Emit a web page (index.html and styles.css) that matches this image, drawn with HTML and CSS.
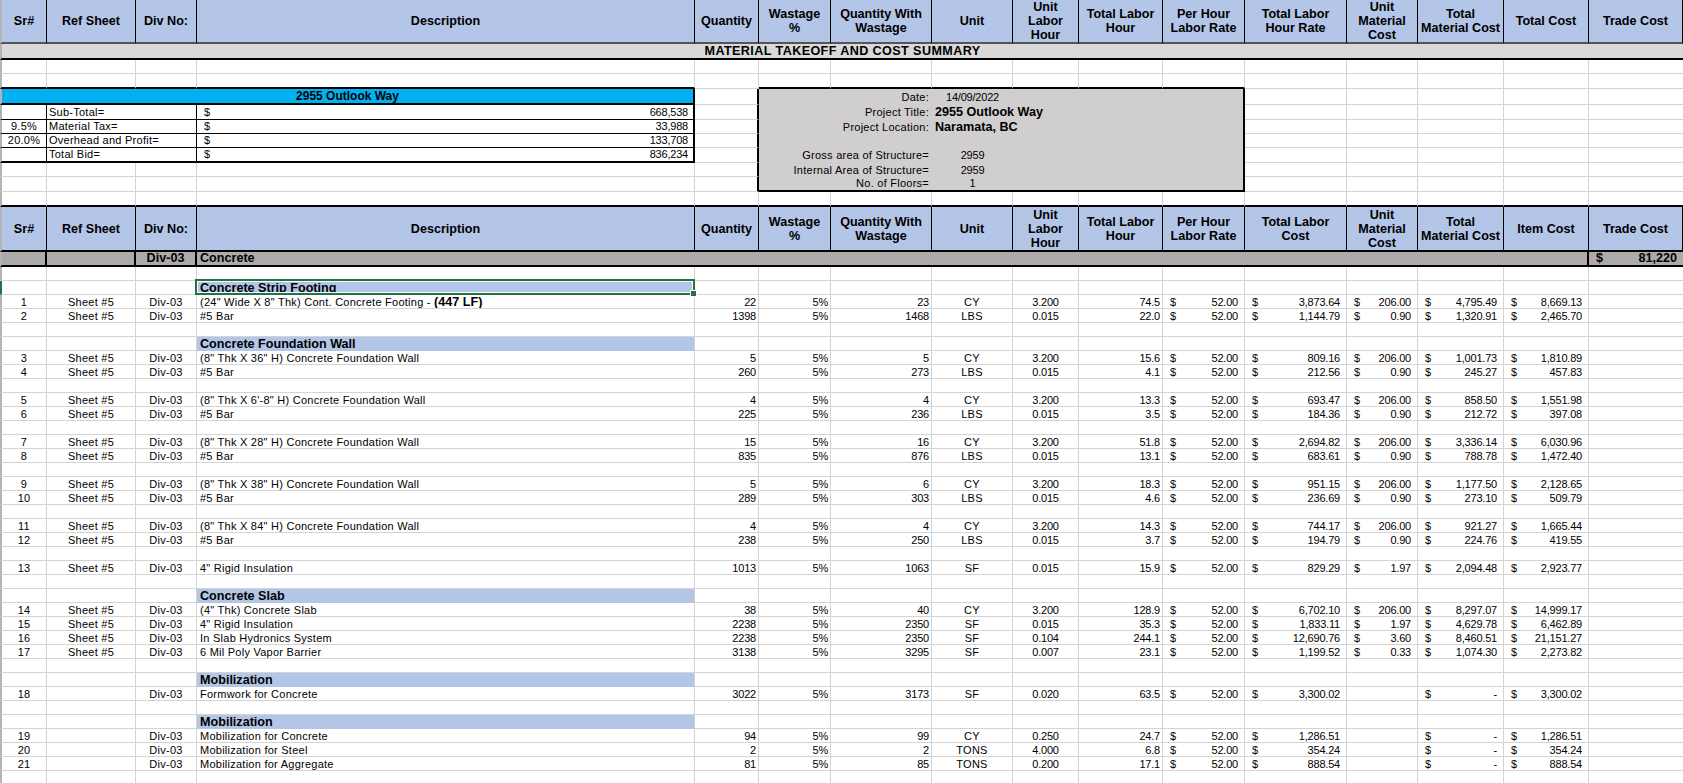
FILE: index.html
```html
<!DOCTYPE html>
<html lang="en">
<head>
    <meta charset="UTF-8">
    <title>Material Takeoff and Cost Summary</title>
    <link rel="stylesheet" href="styles.css">
</head>
<body>
    <table class="sheet">
        <colgroup>
            <col class="c-sr"><col class="c-ref"><col class="c-div"><col class="c-desc">
            <col class="c-qty"><col class="c-wast"><col class="c-qtyw"><col class="c-unit">
            <col class="c-ulh"><col class="c-tlh"><col class="c-rate"><col class="c-tlc">
            <col class="c-umc"><col class="c-tmc"><col class="c-item"><col class="c-trade">
        </colgroup>
        <tbody>
            <tr class="head head-top">
                <th>Sr#</th><th>Ref Sheet</th><th>Div No:</th><th>Description</th><th>Quantity</th><th>Wastage<br>%</th><th>Quantity With<br>Wastage</th><th>Unit</th><th>Unit<br>Labor<br>Hour</th><th>Total Labor<br>Hour</th><th>Per Hour<br>Labor Rate</th><th>Total Labor<br>Hour Rate</th><th>Unit<br>Material<br>Cost</th><th>Total<br>Material Cost</th><th>Total Cost</th><th>Trade Cost</th>
            </tr>
            <tr class="h16"><td class="title" colspan="16">MATERIAL TAKEOFF AND COST SUMMARY</td></tr>
            <tr><td></td><td></td><td></td><td></td><td></td><td></td><td></td><td></td><td></td><td></td><td></td><td></td><td></td><td></td><td></td><td></td></tr>
            <tr class="h15"><td class="over"></td><td class="over"></td><td class="over"></td><td class="over"></td><td></td><td class="over"></td><td class="over"></td><td class="over"></td><td class="over"></td><td class="over"></td><td class="over"></td><td></td><td></td><td></td><td></td><td></td></tr>

            <tr class="h16">
                <td class="bar" colspan="4">2955 Outlook Way</td><td class="edge"></td>
                <td class="info label" colspan="2">Date:</td><td class="info val">14/09/2022</td><td class="info end" colspan="3"></td>
                <td></td><td></td><td></td><td></td><td></td>
            </tr>
            <tr class="h15">
                <td class="sum"></td><td class="sum" colspan="2">Sub-Total=</td><td class="sum amt" colspan="1"><span>$</span>668,538</td><td class="edge"></td>
                <td class="info label" colspan="2">Project Title:</td><td class="info strong end" colspan="4">2955 Outlook Way</td>
                <td></td><td></td><td></td><td></td><td></td>
            </tr>
            <tr>
                <td class="sum pct">9.5%</td><td class="sum" colspan="2">Material Tax=</td><td class="sum amt"><span>$</span>33,988</td><td class="edge"></td>
                <td class="info label" colspan="2">Project Location:</td><td class="info strong end" colspan="4">Naramata, BC</td>
                <td></td><td></td><td></td><td></td><td></td>
            </tr>
            <tr>
                <td class="sum pct">20.0%</td><td class="sum" colspan="2">Overhead and Profit=</td><td class="sum amt"><span>$</span>133,708</td><td class="edge"></td>
                <td class="info label" colspan="2"></td><td class="info" colspan="1"></td><td class="info end" colspan="3"></td>
                <td></td><td></td><td></td><td></td><td></td>
            </tr>
            <tr class="h15">
                <td class="sum last"></td><td class="sum last" colspan="2">Total Bid=</td><td class="sum last amt"><span>$</span>836,234</td><td class="edge"></td>
                <td class="info label" colspan="2">Gross area of Structure=</td><td class="info val">2959</td><td class="info end" colspan="3"></td>
                <td></td><td></td><td></td><td></td><td></td>
            </tr>
            <tr>
                <td></td><td></td><td></td><td></td><td class="edge"></td>
                <td class="info label" colspan="2">Internal Area of Structure=</td><td class="info val">2959</td><td class="info end" colspan="3"></td>
                <td></td><td></td><td></td><td></td><td></td>
            </tr>
            <tr class="h15">
                <td></td><td></td><td></td><td></td><td class="edge"></td>
                <td class="info label close" colspan="2">No. of Floors=</td><td class="info val close">1</td><td class="info end close" colspan="3"></td>
                <td></td><td></td><td></td><td></td><td></td>
            </tr>
            <tr class="h15"><td class="over"></td><td class="over"></td><td class="over"></td><td class="over"></td><td class="over"></td><td class="over"></td><td class="over"></td><td class="over"></td><td class="over"></td><td class="over"></td><td class="over"></td><td class="over"></td><td class="over"></td><td class="over"></td><td class="over"></td><td class="over"></td></tr>

            <tr class="head">
                <th>Sr#</th><th>Ref Sheet</th><th>Div No:</th><th>Description</th><th>Quantity</th><th>Wastage<br>%</th><th>Quantity With<br>Wastage</th><th>Unit</th><th>Unit<br>Labor<br>Hour</th><th>Total Labor<br>Hour</th><th>Per Hour<br>Labor Rate</th><th>Total Labor<br>Cost</th><th>Unit<br>Material<br>Cost</th><th>Total<br>Material Cost</th><th>Item Cost</th><th>Trade Cost</th>
            </tr>
            <tr class="division h15">
                <td></td><td></td><td class="mid">Div-03</td><td class="open">Concrete</td><td colspan="11"></td><td class="trade"><span>$</span>81,220</td>
            </tr>
            <tr><td></td><td></td><td></td><td></td><td></td><td></td><td></td><td></td><td></td><td></td><td></td><td></td><td></td><td></td><td></td><td></td></tr>

            <tr class="section picked"><td></td><td></td><td></td><td class="sel">Concrete Strip Footing<i class="handle"></i></td><td></td><td></td><td></td><td></td><td></td><td></td><td></td><td></td><td></td><td></td><td></td><td></td></tr>
            <tr class="item"><td>1</td><td>Sheet #5</td><td>Div-03</td><td>(24" Wide X 8" Thk) Cont. Concrete Footing - <b>(447 LF)</b></td><td>22</td><td>5%</td><td>23</td><td>CY</td><td>3.200</td><td>74.5</td><td><span>$</span>52.00</td><td><span>$</span>3,873.64</td><td><span>$</span>206.00</td><td><span>$</span>4,795.49</td><td><span>$</span>8,669.13</td><td></td></tr>
            <tr class="item"><td>2</td><td>Sheet #5</td><td>Div-03</td><td>#5 Bar</td><td>1398</td><td>5%</td><td>1468</td><td>LBS</td><td>0.015</td><td>22.0</td><td><span>$</span>52.00</td><td><span>$</span>1,144.79</td><td><span>$</span>0.90</td><td><span>$</span>1,320.91</td><td><span>$</span>2,465.70</td><td></td></tr>
            <tr><td></td><td></td><td></td><td></td><td></td><td></td><td></td><td></td><td></td><td></td><td></td><td></td><td></td><td></td><td></td><td></td></tr>

            <tr class="section"><td></td><td></td><td></td><td>Concrete Foundation Wall</td><td></td><td></td><td></td><td></td><td></td><td></td><td></td><td></td><td></td><td></td><td></td><td></td></tr>
            <tr class="item"><td>3</td><td>Sheet #5</td><td>Div-03</td><td>(8" Thk X 36" H) Concrete Foundation Wall</td><td>5</td><td>5%</td><td>5</td><td>CY</td><td>3.200</td><td>15.6</td><td><span>$</span>52.00</td><td><span>$</span>809.16</td><td><span>$</span>206.00</td><td><span>$</span>1,001.73</td><td><span>$</span>1,810.89</td><td></td></tr>
            <tr class="item"><td>4</td><td>Sheet #5</td><td>Div-03</td><td>#5 Bar</td><td>260</td><td>5%</td><td>273</td><td>LBS</td><td>0.015</td><td>4.1</td><td><span>$</span>52.00</td><td><span>$</span>212.56</td><td><span>$</span>0.90</td><td><span>$</span>245.27</td><td><span>$</span>457.83</td><td></td></tr>
            <tr><td></td><td></td><td></td><td></td><td></td><td></td><td></td><td></td><td></td><td></td><td></td><td></td><td></td><td></td><td></td><td></td></tr>
            <tr class="item"><td>5</td><td>Sheet #5</td><td>Div-03</td><td>(8" Thk X 6'-8" H) Concrete Foundation Wall</td><td>4</td><td>5%</td><td>4</td><td>CY</td><td>3.200</td><td>13.3</td><td><span>$</span>52.00</td><td><span>$</span>693.47</td><td><span>$</span>206.00</td><td><span>$</span>858.50</td><td><span>$</span>1,551.98</td><td></td></tr>
            <tr class="item"><td>6</td><td>Sheet #5</td><td>Div-03</td><td>#5 Bar</td><td>225</td><td>5%</td><td>236</td><td>LBS</td><td>0.015</td><td>3.5</td><td><span>$</span>52.00</td><td><span>$</span>184.36</td><td><span>$</span>0.90</td><td><span>$</span>212.72</td><td><span>$</span>397.08</td><td></td></tr>
            <tr><td></td><td></td><td></td><td></td><td></td><td></td><td></td><td></td><td></td><td></td><td></td><td></td><td></td><td></td><td></td><td></td></tr>
            <tr class="item"><td>7</td><td>Sheet #5</td><td>Div-03</td><td>(8" Thk X 28" H) Concrete Foundation Wall</td><td>15</td><td>5%</td><td>16</td><td>CY</td><td>3.200</td><td>51.8</td><td><span>$</span>52.00</td><td><span>$</span>2,694.82</td><td><span>$</span>206.00</td><td><span>$</span>3,336.14</td><td><span>$</span>6,030.96</td><td></td></tr>
            <tr class="item"><td>8</td><td>Sheet #5</td><td>Div-03</td><td>#5 Bar</td><td>835</td><td>5%</td><td>876</td><td>LBS</td><td>0.015</td><td>13.1</td><td><span>$</span>52.00</td><td><span>$</span>683.61</td><td><span>$</span>0.90</td><td><span>$</span>788.78</td><td><span>$</span>1,472.40</td><td></td></tr>
            <tr><td></td><td></td><td></td><td></td><td></td><td></td><td></td><td></td><td></td><td></td><td></td><td></td><td></td><td></td><td></td><td></td></tr>
            <tr class="item"><td>9</td><td>Sheet #5</td><td>Div-03</td><td>(8" Thk X 38" H) Concrete Foundation Wall</td><td>5</td><td>5%</td><td>6</td><td>CY</td><td>3.200</td><td>18.3</td><td><span>$</span>52.00</td><td><span>$</span>951.15</td><td><span>$</span>206.00</td><td><span>$</span>1,177.50</td><td><span>$</span>2,128.65</td><td></td></tr>
            <tr class="item"><td>10</td><td>Sheet #5</td><td>Div-03</td><td>#5 Bar</td><td>289</td><td>5%</td><td>303</td><td>LBS</td><td>0.015</td><td>4.6</td><td><span>$</span>52.00</td><td><span>$</span>236.69</td><td><span>$</span>0.90</td><td><span>$</span>273.10</td><td><span>$</span>509.79</td><td></td></tr>
            <tr><td></td><td></td><td></td><td></td><td></td><td></td><td></td><td></td><td></td><td></td><td></td><td></td><td></td><td></td><td></td><td></td></tr>
            <tr class="item"><td>11</td><td>Sheet #5</td><td>Div-03</td><td>(8" Thk X 84" H) Concrete Foundation Wall</td><td>4</td><td>5%</td><td>4</td><td>CY</td><td>3.200</td><td>14.3</td><td><span>$</span>52.00</td><td><span>$</span>744.17</td><td><span>$</span>206.00</td><td><span>$</span>921.27</td><td><span>$</span>1,665.44</td><td></td></tr>
            <tr class="item"><td>12</td><td>Sheet #5</td><td>Div-03</td><td>#5 Bar</td><td>238</td><td>5%</td><td>250</td><td>LBS</td><td>0.015</td><td>3.7</td><td><span>$</span>52.00</td><td><span>$</span>194.79</td><td><span>$</span>0.90</td><td><span>$</span>224.76</td><td><span>$</span>419.55</td><td></td></tr>
            <tr><td></td><td></td><td></td><td></td><td></td><td></td><td></td><td></td><td></td><td></td><td></td><td></td><td></td><td></td><td></td><td></td></tr>
            <tr class="item"><td>13</td><td>Sheet #5</td><td>Div-03</td><td>4" Rigid Insulation</td><td>1013</td><td>5%</td><td>1063</td><td>SF</td><td>0.015</td><td>15.9</td><td><span>$</span>52.00</td><td><span>$</span>829.29</td><td><span>$</span>1.97</td><td><span>$</span>2,094.48</td><td><span>$</span>2,923.77</td><td></td></tr>
            <tr><td></td><td></td><td></td><td></td><td></td><td></td><td></td><td></td><td></td><td></td><td></td><td></td><td></td><td></td><td></td><td></td></tr>

            <tr class="section"><td></td><td></td><td></td><td>Concrete Slab</td><td></td><td></td><td></td><td></td><td></td><td></td><td></td><td></td><td></td><td></td><td></td><td></td></tr>
            <tr class="item"><td>14</td><td>Sheet #5</td><td>Div-03</td><td>(4" Thk) Concrete Slab</td><td>38</td><td>5%</td><td>40</td><td>CY</td><td>3.200</td><td>128.9</td><td><span>$</span>52.00</td><td><span>$</span>6,702.10</td><td><span>$</span>206.00</td><td><span>$</span>8,297.07</td><td><span>$</span>14,999.17</td><td></td></tr>
            <tr class="item"><td>15</td><td>Sheet #5</td><td>Div-03</td><td>4" Rigid Insulation</td><td>2238</td><td>5%</td><td>2350</td><td>SF</td><td>0.015</td><td>35.3</td><td><span>$</span>52.00</td><td><span>$</span>1,833.11</td><td><span>$</span>1.97</td><td><span>$</span>4,629.78</td><td><span>$</span>6,462.89</td><td></td></tr>
            <tr class="item"><td>16</td><td>Sheet #5</td><td>Div-03</td><td>In Slab Hydronics System</td><td>2238</td><td>5%</td><td>2350</td><td>SF</td><td>0.104</td><td>244.1</td><td><span>$</span>52.00</td><td><span>$</span>12,690.76</td><td><span>$</span>3.60</td><td><span>$</span>8,460.51</td><td><span>$</span>21,151.27</td><td></td></tr>
            <tr class="item"><td>17</td><td>Sheet #5</td><td>Div-03</td><td>6 Mil Poly Vapor Barrier</td><td>3138</td><td>5%</td><td>3295</td><td>SF</td><td>0.007</td><td>23.1</td><td><span>$</span>52.00</td><td><span>$</span>1,199.52</td><td><span>$</span>0.33</td><td><span>$</span>1,074.30</td><td><span>$</span>2,273.82</td><td></td></tr>
            <tr><td></td><td></td><td></td><td></td><td></td><td></td><td></td><td></td><td></td><td></td><td></td><td></td><td></td><td></td><td></td><td></td></tr>

            <tr class="section"><td></td><td></td><td></td><td>Mobilization</td><td></td><td></td><td></td><td></td><td></td><td></td><td></td><td></td><td></td><td></td><td></td><td></td></tr>
            <tr class="item"><td>18</td><td></td><td>Div-03</td><td>Formwork for Concrete</td><td>3022</td><td>5%</td><td>3173</td><td>SF</td><td>0.020</td><td>63.5</td><td><span>$</span>52.00</td><td><span>$</span>3,300.02</td><td></td><td class="dash"><span>$</span>-</td><td><span>$</span>3,300.02</td><td></td></tr>
            <tr><td></td><td></td><td></td><td></td><td></td><td></td><td></td><td></td><td></td><td></td><td></td><td></td><td></td><td></td><td></td><td></td></tr>

            <tr class="section"><td></td><td></td><td></td><td>Mobilization</td><td></td><td></td><td></td><td></td><td></td><td></td><td></td><td></td><td></td><td></td><td></td><td></td></tr>
            <tr class="item"><td>19</td><td></td><td>Div-03</td><td>Mobilization for Concrete</td><td>94</td><td>5%</td><td>99</td><td>CY</td><td>0.250</td><td>24.7</td><td><span>$</span>52.00</td><td><span>$</span>1,286.51</td><td></td><td class="dash"><span>$</span>-</td><td><span>$</span>1,286.51</td><td></td></tr>
            <tr class="item"><td>20</td><td></td><td>Div-03</td><td>Mobilization for Steel</td><td>2</td><td>5%</td><td>2</td><td>TONS</td><td>4.000</td><td>6.8</td><td><span>$</span>52.00</td><td><span>$</span>354.24</td><td></td><td class="dash"><span>$</span>-</td><td><span>$</span>354.24</td><td></td></tr>
            <tr class="item"><td>21</td><td></td><td>Div-03</td><td>Mobilization for Aggregate</td><td>81</td><td>5%</td><td>85</td><td>TONS</td><td>0.200</td><td>17.1</td><td><span>$</span>52.00</td><td><span>$</span>888.54</td><td></td><td class="dash"><span>$</span>-</td><td><span>$</span>888.54</td><td></td></tr>
            <tr><td></td><td></td><td></td><td></td><td></td><td></td><td></td><td></td><td></td><td></td><td></td><td></td><td></td><td></td><td></td><td></td></tr>
        </tbody>
    </table>
</body>
</html>
```

FILE: styles.css
```css
html, body {
    margin: 0;
    height: 783px;
    overflow: hidden;
    background: #fff;
}
.sheet {
    width: 1683px;
    table-layout: fixed;
    border-collapse: separate;
    border-spacing: 0;
    font-family: "Liberation Sans", Arial, sans-serif;
    font-size: 11px;
    line-height: 13px;
    color: #000;
}
.c-sr { width: 47px; }
.c-ref { width: 89px; }
.c-div { width: 61px; }
.c-desc { width: 498px; }
.c-qty { width: 64px; }
.c-wast { width: 72px; }
.c-qtyw { width: 101px; }
.c-unit { width: 81px; }
.c-ulh { width: 66px; }
.c-tlh { width: 84px; }
.c-rate { width: 82px; }
.c-tlc { width: 102px; }
.c-umc { width: 71px; }
.c-tmc { width: 86px; }
.c-item { width: 85px; }
.c-trade { width: 94px; }

tr {
    height: 14px;
}
tr.h15 {
    height: 15px;
}
tr.h16 {
    height: 16px;
}
th, td {
    padding: 0;
    border-right: 1px solid #d4d4d4;
    border-bottom: 1px solid #d4d4d4;
    white-space: nowrap;
    overflow: hidden;
    vertical-align: middle;
    letter-spacing: 0.25px;
}
th:first-child, td:first-child {
    border-left: 2px solid #b4b4b4;
}
th:last-child, td:last-child {
    border-right: 0;
}

/* header rows */
.head {
    height: 45px;
}
.head-top {
    height: 44px;
}
.head th {
    background: #b4c6e7;
    border-right: 1px solid #000;
    border-bottom: 2px solid #000;
    font-size: 12.6px;
    line-height: 14px;
    letter-spacing: 0;
    font-weight: bold;
    text-align: center;
}
.head-top th {
    border-bottom-color: #555;
}
.title {
    background: #d9d9d9;
    border-right: 0;
    border-bottom: 2px solid #000;
    font-size: 12.6px;
    font-weight: bold;
    letter-spacing: 0.4px;
    text-align: center;
}
td.over {
    border-bottom: 2px solid #000;
}

/* summary box */
.bar {
    background: #00b0f0;
    border-right: 2px solid #000;
    border-bottom: 2px solid #000;
    font-weight: bold;
    font-size: 12px;
    letter-spacing: 0;
    text-align: center;
}
.sum {
    border-right: 1px solid #000;
    border-bottom: 1px solid #000;
    padding-left: 2px;
}
.sum.last {
    border-bottom: 2px solid #000;
}
.sum.pct {
    padding: 0;
    text-align: center;
}
.sum.amt {
    border-right: 2px solid #000;
    padding: 0 5px 0 7px;
    text-align: right;
    letter-spacing: -0.2px;
}
.sum.amt span {
    float: left;
}

/* project box */
td.edge {
    border-right: 2px solid #000;
}
.info {
    background: #d0cece;
    border-right: 0;
    border-bottom: 0;
}
.info.label {
    padding-right: 3px;
    text-align: right;
}
.info.val {
    text-align: center;
    letter-spacing: -0.2px;
}
.info.strong {
    padding-left: 3px;
    font-weight: bold;
    font-size: 12.6px;
    letter-spacing: 0;
}
td.info.end {
    border-right: 2px solid #000;
}
td.info.close {
    border-bottom: 2px solid #000;
}

/* division row */
.division td {
    background: #aeaaaa;
    border-right: 2px solid #000;
    border-bottom: 2px solid #000;
    font-weight: bold;
    font-size: 12.6px;
    letter-spacing: 0;
    padding-left: 3px;
}
.division td.open {
    border-right: 0;
}
.division td:last-child {
    padding-right: 6px;
    padding-left: 7px;
    border-right: 0;
    text-align: right;
}
.division td:last-child span {
    float: left;
}
.division .mid {
    padding-left: 0;
    text-align: center;
}

/* section heading rows */
.section td:nth-child(4) {
    background: #b4c6e7;
    padding-top: 1px;
    padding-left: 3px;
    border-bottom-color: #b4c6e7;
    font-weight: bold;
    font-size: 12.6px;
    line-height: 12px;
    letter-spacing: 0;
}
.picked td:first-child {
    border-left-color: #217346;
}
td.sel {
    position: relative;
    overflow: visible;
}
td.sel::after {
    content: "";
    position: absolute;
    top: -2px;
    right: -1px;
    bottom: -1px;
    left: -2px;
    border: 2px solid #217346;
    box-shadow: inset 0 0 0 1px #fff;
}
.handle {
    position: absolute;
    z-index: 1;
    right: -3px;
    bottom: -3px;
    width: 5px;
    height: 5px;
    background: #217346;
    border: 1px solid #fff;
}

/* line items */
.item td {
    padding-top: 1px;
    line-height: 12px;
}
.item td:nth-child(-n+3),
.item td:nth-child(8),
.item td:nth-child(9) {
    text-align: center;
}
.item td:nth-child(4) {
    padding-left: 3px;
}
.item td:nth-child(4) b {
    font-size: 12.6px;
    letter-spacing: 0;
}
.item td:nth-child(n+5) {
    letter-spacing: -0.2px;
}
.item td:nth-child(8) {
    letter-spacing: 0.25px;
}
.item td:nth-child(5),
.item td:nth-child(6),
.item td:nth-child(7),
.item td:nth-child(10) {
    padding-right: 2px;
    text-align: right;
}
.item td:nth-child(n+11):nth-child(-n+15) {
    padding: 1px 6px 0 7px;
    text-align: right;
}
.item span {
    float: left;
}
.item td.dash {
    padding-right: 20px;
}
```
